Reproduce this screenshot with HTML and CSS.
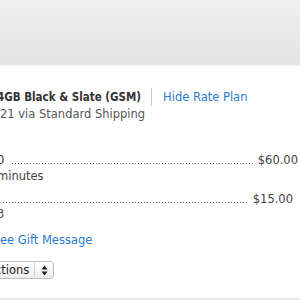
FILE: index.html
```html
<!DOCTYPE html>
<html>
<head>
<meta charset="utf-8">
<link rel="stylesheet" href="styles.css">
</head>
<body>
<div class="header"></div>
<div class="content">
  <div class="title-row">
    <span class="title">4GB Black &amp; Slate (GSM)</span>
    <span class="sep"></span>
    <a class="link">Hide Rate Plan</a>
  </div>
  <div class="sub">21 via Standard Shipping</div>

  <div class="line first">
    <span class="lbl">0</span>
    <span class="dots"></span>
    <span class="price">$60.00</span>
  </div>
  <div class="note n1">minutes</div>

  <div class="line second">
    <span class="dots"></span>
    <span class="price">$15.00</span>
  </div>
  <div class="note n2">3</div>

  <a class="link gift">ee Gift Message</a>

  <div class="select">
    <span class="sel-text">ctions</span>
    <span class="sel-arrows">
      <svg width="7" height="11" viewBox="0 0 7 11"><path d="M3.5 0.5 L6.5 4.5 L0.5 4.5 Z M0.5 6.5 L6.5 6.5 L3.5 10.5 Z" fill="#222"/></svg>
    </span>
  </div>
</div>
<div class="footer"></div>
</body>
</html>
```
FILE: styles.css
```css
html, body {
  margin: 0;
  padding: 0;
  width: 300px;
  height: 300px;
  overflow: hidden;
  background: #fff;
  font-family: "DejaVu Sans", sans-serif;
  font-size: 11.5px;
  line-height: 14px;
  color: #333;
}
.header {
  height: 65px;
  background: linear-gradient(#f0f0f0, #e3e3e3);
  border-bottom: 1px solid #f5f5f5;
}
.content {
  display: flex;
  flex-direction: column;
  align-items: flex-start;
  margin-left: -3px;
  padding-top: 22px;
}
.title-row {
  display: flex;
  align-items: center;
  height: 17px;
}
.title {
  font-family: "DejaVu Sans Condensed", "DejaVu Sans", sans-serif;
  font-stretch: condensed;
  font-weight: bold;
  color: #333;
}
.sep {
  width: 1px;
  height: 18px;
  background: #cccccc;
  margin: 0 11px 0 10px;
}
.link {
  color: #2a7ad0;
}
.sub {
  color: #555;
  margin-top: 2px;
  margin-left: 3px;
}
.line {
  display: flex;
  align-items: baseline;
}
.line.first {
  margin-top: 32px;
  width: 301px;
}
.line.second {
  margin-top: 9px;
  margin-left: 6px;
  width: 290px;
}
.lbl { margin-right: 8px; }
.dots {
  flex: 1;
  height: 1px;
  margin-right: 5px;
  background-image: linear-gradient(to right, #666 1px, transparent 1px);
  background-size: 3px 1px;
  background-repeat: repeat-x;
}
.price { color: #444; }
.note {
  color: #444;
}
.n1 { margin-top: 2px; }
.n2 { margin-top: 1px; }
.gift {
  margin-top: 12px;
  margin-left: 3px;
}
.select {
  margin-top: 14px;
  display: flex;
  align-items: center;
  height: 16px;
  border: 1px solid #bdbdbd;
  border-radius: 4px;
  background: linear-gradient(#ffffff, #ececec);
  margin-left: -13px;
}
.sel-text {
  padding: 0 5px 0 10px;
  color: #222;
  border-right: 1px solid #cfcfcf;
}
.sel-arrows {
  display: flex;
  align-items: center;
  padding: 0 5px 0 6px;
}
.footer {
  position: absolute;
  left: 0;
  top: 298px;
  width: 300px;
  height: 2px;
  background: #eaeaea;
}
```
